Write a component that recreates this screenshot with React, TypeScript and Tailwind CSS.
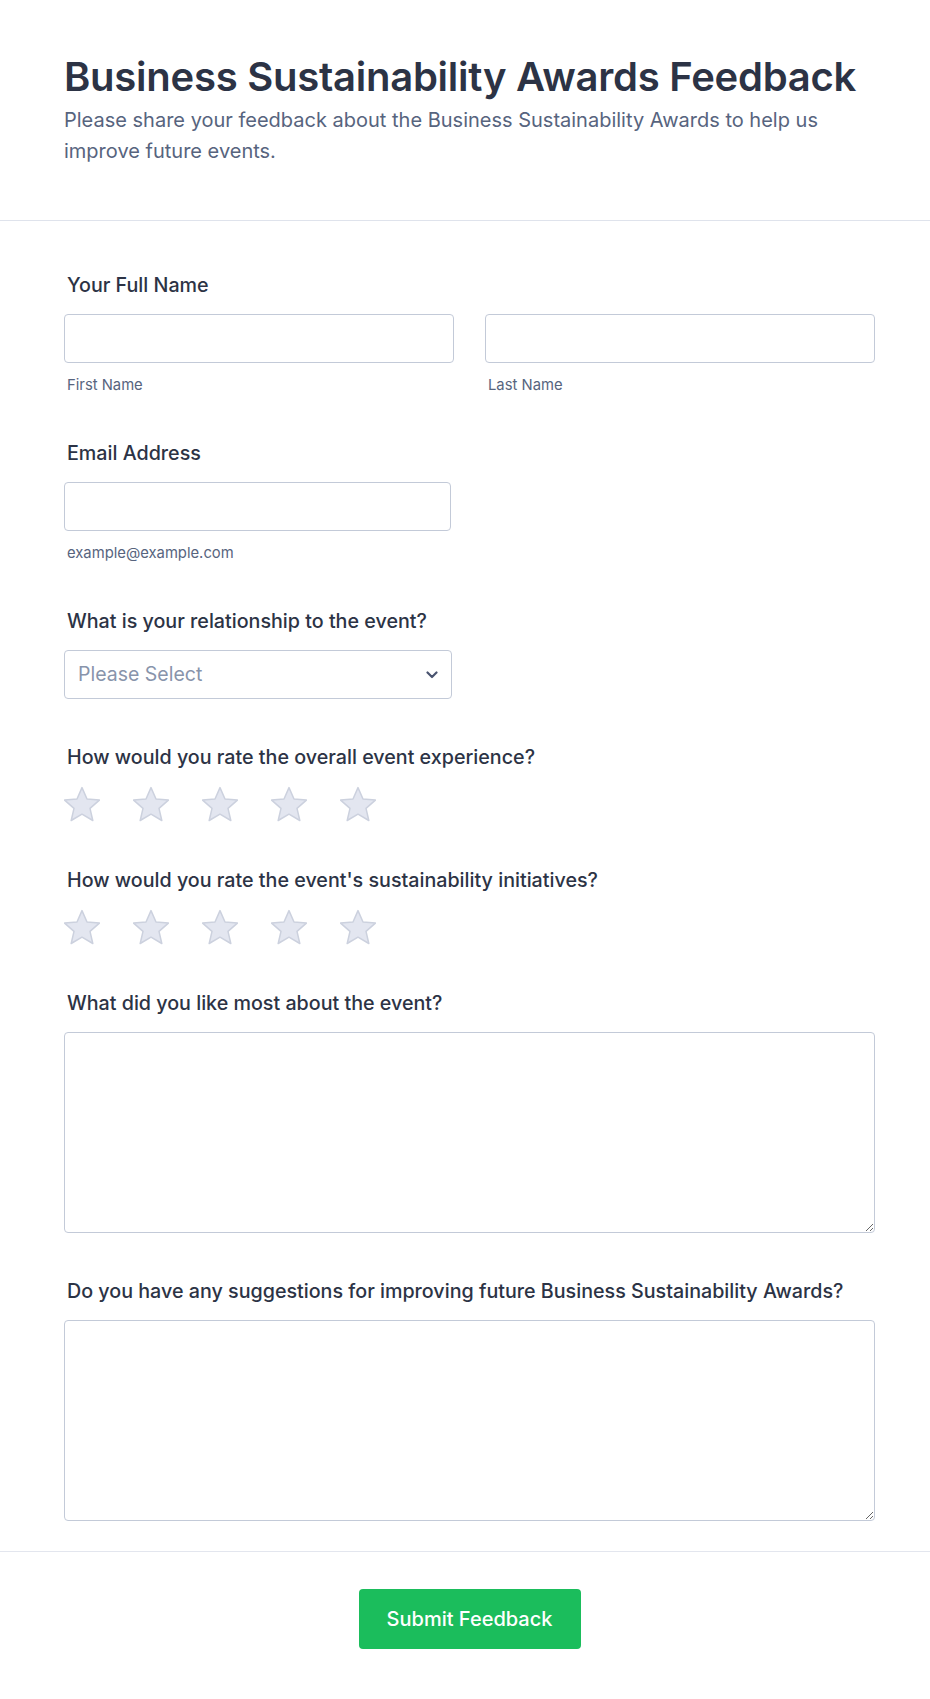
const font = { fontFamily: 'Inter, "Noto Sans", sans-serif' }

function Star() {
  return (
    <svg width="36" height="36" viewBox="0 0 36 36" className="block">
      <path
        d="M18 1.6 L23 13 L35.4 14.1 L26 22.4 L28.8 34.5 L18 28.2 L7.2 34.5 L10 22.4 L0.6 14.1 L13 13 Z"
        fill="#e3e6f0"
        stroke="#ccd1de"
        strokeWidth="1.5"
        strokeLinejoin="round"
      />
    </svg>
  )
}

function Stars() {
  return (
    <div className="flex gap-[33px] mt-[2px]">
      {[0, 1, 2, 3, 4].map((i) => (
        <Star key={i} />
      ))}
    </div>
  )
}

function Label({ children }: { children: React.ReactNode }) {
  return (
    <label className="block px-[3px] text-[19.7px] leading-[28px] font-medium text-[#2c3345] mb-[15px]">
      {children}
    </label>
  )
}

function Sub({ children }: { children: React.ReactNode }) {
  return <p className="mt-[12px] px-[3px] text-[14.8px] leading-[20px] text-[#57647e]">{children}</p>
}

const inputCls =
  'block w-full h-[49px] rounded-[4px] border border-[#c3cad8] bg-white px-3 outline-none'

export default function App() {
  return (
    <div className="min-h-screen bg-white" style={font}>
      {/* Header */}
      <div className="pl-16 pr-[55px] pt-[53px] pb-[53px] border-b border-[#dfe3ec]">
        <h1 className="text-[40px] leading-[48px] font-semibold tracking-[-0.25px] text-[#2c3345]">
          Business Sustainability Awards Feedback
        </h1>
        <p className="mt-[4px] text-[20px] leading-[31px] text-[#57647e]">
          Please share your feedback about the Business Sustainability Awards to help us improve
          future events.
        </p>
      </div>

      {/* Form */}
      <div className="pl-[64px] pr-[55px] pt-[50px] pb-[30px] flex flex-col gap-[44px]">
        <div>
          <Label>Your Full Name</Label>
          <div className="grid grid-cols-2 gap-[31px]">
            <div>
              <input className={inputCls} />
              <Sub>First Name</Sub>
            </div>
            <div>
              <input className={inputCls} />
              <Sub>Last Name</Sub>
            </div>
          </div>
        </div>

        <div>
          <Label>Email Address</Label>
          <div className="w-[387px]">
            <input className={inputCls} />
            <Sub>example@example.com</Sub>
          </div>
        </div>

        <div>
          <Label>What is your relationship to the event?</Label>
          <div className="w-[388px] h-[49px] rounded-[4px] border border-[#c3cad8] bg-white flex items-center justify-between pl-[13px] pr-[13px]">
            <span className="text-[19.5px] text-[#8894ab]">Please Select</span>
            <svg width="12" height="8" viewBox="0 0 12 8" fill="none">
              <path d="M1.5 1.5 L6 6 L10.5 1.5" stroke="#4a5470" strokeWidth="2.2" strokeLinecap="round" strokeLinejoin="round" />
            </svg>
          </div>
        </div>

        <div>
          <Label>How would you rate the overall event experience?</Label>
          <Stars />
        </div>

        <div>
          <Label>How would you rate the event's sustainability initiatives?</Label>
          <Stars />
        </div>

        <div>
          <Label>What did you like most about the event?</Label>
          <textarea className="block w-full h-[201px] rounded-[4px] border border-[#c3cad8] bg-white p-3 outline-none" />
        </div>

        <div>
          <Label>Do you have any suggestions for improving future Business Sustainability Awards?</Label>
          <textarea className="block w-full h-[201px] rounded-[4px] border border-[#c3cad8] bg-white p-3 outline-none" />
        </div>
      </div>

      {/* Footer */}
      <div className="border-t border-[#e3e6ee] pt-[37px] pb-[50px] pl-[64px] pr-[55px] flex justify-center">
        <button className="w-[222px] h-[60px] rounded-[4px] bg-[#1bbd5c] text-white text-[20px] font-medium">
          Submit Feedback
        </button>
      </div>
    </div>
  )
}
